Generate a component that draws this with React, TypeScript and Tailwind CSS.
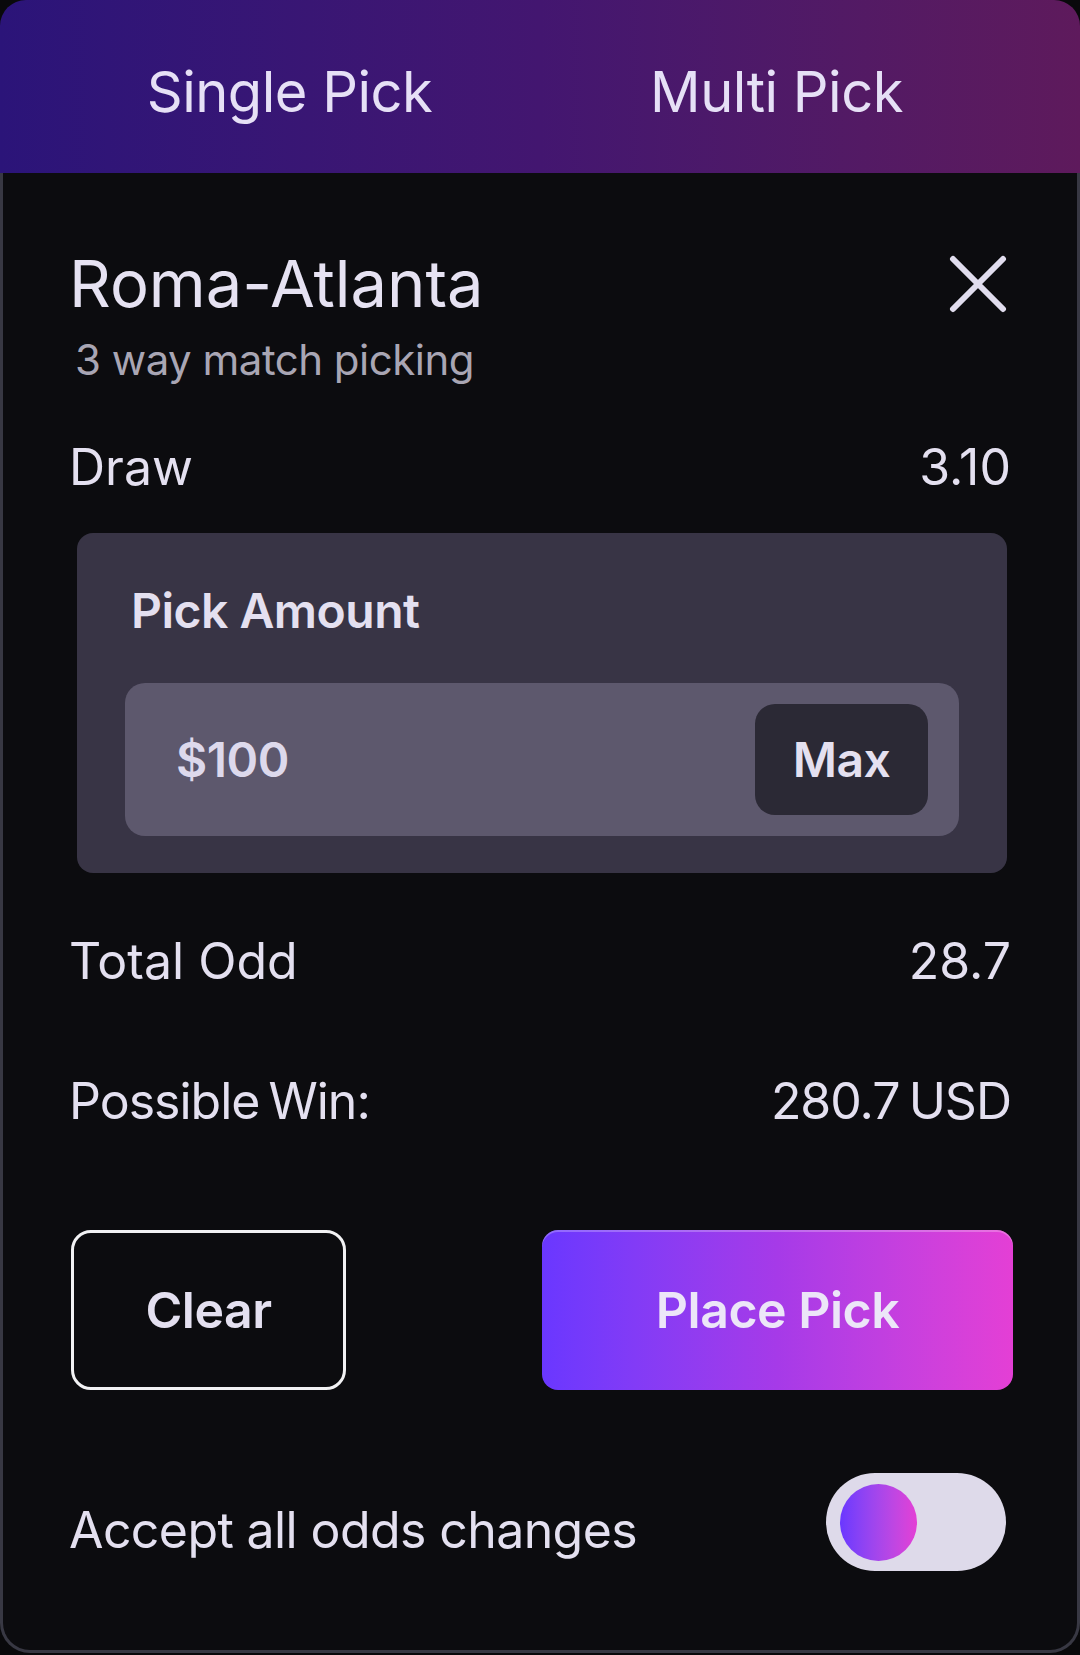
import { useState } from 'react'

const font = { fontFamily: 'Inter, "Noto Sans", sans-serif' }

function CloseIcon() {
  return (
    <svg width="58" height="58" viewBox="0 0 58 58" fill="none">
      <path d="M4 4L54 54M54 4L4 54" stroke="#e1ddee" strokeWidth="6" strokeLinecap="round" />
    </svg>
  )
}

function Row({ label, value, className }: { label: string; value: string; className?: string }) {
  return (
    <div className={`flex items-center justify-between text-[50px] leading-[50px] text-[#e4e0f0] ${className ?? ''}`}>
      <span>{label}</span>
      <span>{value}</span>
    </div>
  )
}

export default function App() {
  const [accept, setAccept] = useState(true)
  const [tab, setTab] = useState<'single' | 'multi'>('single')

  return (
    <div className="w-[1080px] h-[1655px] bg-[#09090b]" style={font}>
      <div className="flex h-[1653px] flex-col">
        <div className="grid h-[173px] shrink-0 grid-cols-2 items-center rounded-t-[26px] bg-gradient-to-r from-[#2b1479] via-[#431670] to-[#5e1a5c] pl-[46px] pr-[60px] pt-[10px]">
          <button
            onClick={() => setTab('single')}
            className="text-center text-[56px] leading-[56px] tracking-[-0.5px] text-[#e6e0f6]"
          >
            Single Pick
          </button>
          <button
            onClick={() => setTab('multi')}
            className="text-center text-[56px] leading-[56px] tracking-[-0.5px] text-[#e6e0f6]"
          >
            Multi Pick
          </button>
        </div>

        <div className="flex flex-1 flex-col rounded-b-[30px] border-x-[3px] border-b-[3px] border-[#383843] bg-[#0c0c0f] pl-[66px] pr-[66px] pt-[79px]">
          <div className="flex items-start justify-between">
            <h1 className="text-[65px] leading-[64px] text-[#e6e2f2]">Roma-Atlanta</h1>
            <button className="mr-[4px] mt-[3px]">
              <CloseIcon />
            </button>
          </div>
          <p className="ml-[6px] mt-[23px] text-[42px] leading-[42px] tracking-[-0.5px] text-[#a9a6b4]">
            3 way match picking
          </p>

          <Row label="Draw" value="3.10" className="mt-[61px]" />

          <div className="ml-[8px] mr-[4px] mt-[41px] rounded-[16px] bg-[#383445] px-[48px] pb-[37px] pt-[54px]">
            <div className="pl-[6px] text-[48px] font-semibold leading-[48px] tracking-[-0.5px] text-[#e4e0f0]">
              Pick Amount
            </div>
            <div className="mt-[48px] flex h-[153px] items-center justify-between rounded-[20px] bg-[#5d586d] pl-[51px] pr-[31px]">
              <span className="text-[48px] font-semibold tracking-[-0.5px] text-[#ddd9ec]">$100</span>
              <button className="flex h-[111px] w-[173px] items-center justify-center rounded-[20px] bg-[#2b2935] text-[48px] font-semibold tracking-[-0.5px] text-[#e4e0f0]">
                Max
              </button>
            </div>
          </div>

          <Row label="Total Odd" value="28.7" className="mt-[63px]" />
          <Row label="Possible Win:" value="280.7 USD" className="mt-[90px] tracking-[-1px] [word-spacing:-4px]" />

          <div className="-mr-[2px] mt-[104px] flex items-center justify-between">
            <button className="ml-[2px] flex h-[160px] w-[275px] items-center justify-center rounded-[20px] border-[3px] border-[#f2f2f4] text-[50px] font-semibold tracking-[-0.5px] text-[#e4e0f0]">
              Clear
            </button>
            <button className="flex h-[160px] w-[471px] items-center justify-center rounded-[16px] bg-gradient-to-r from-[#6a37ff] via-[#a63ae8] to-[#e43fd5] text-[50px] font-semibold tracking-[-0.5px] text-[#ece6f8] shadow-[inset_0_2px_0_rgba(255,255,255,0.25)]">
              Place Pick
            </button>
          </div>

          <div className="mt-[83px] flex items-start justify-between">
            <span className="mt-[32px] text-[50px] leading-[50px] tracking-[-0.6px] text-[#e4e0f0]">
              Accept all odds changes
            </span>
            <button
              onClick={() => setAccept(!accept)}
              className={`mr-[5px] flex h-[98px] w-[180px] items-center rounded-full bg-[#dedaea] px-[14px] ${accept ? 'justify-start' : 'justify-end'}`}
            >
              <span className="h-[77px] w-[77px] rounded-full bg-gradient-to-r from-[#6a37ff] to-[#e43fd5]" />
            </button>
          </div>
        </div>
      </div>
      <span className="hidden">{tab}</span>
    </div>
  )
}
